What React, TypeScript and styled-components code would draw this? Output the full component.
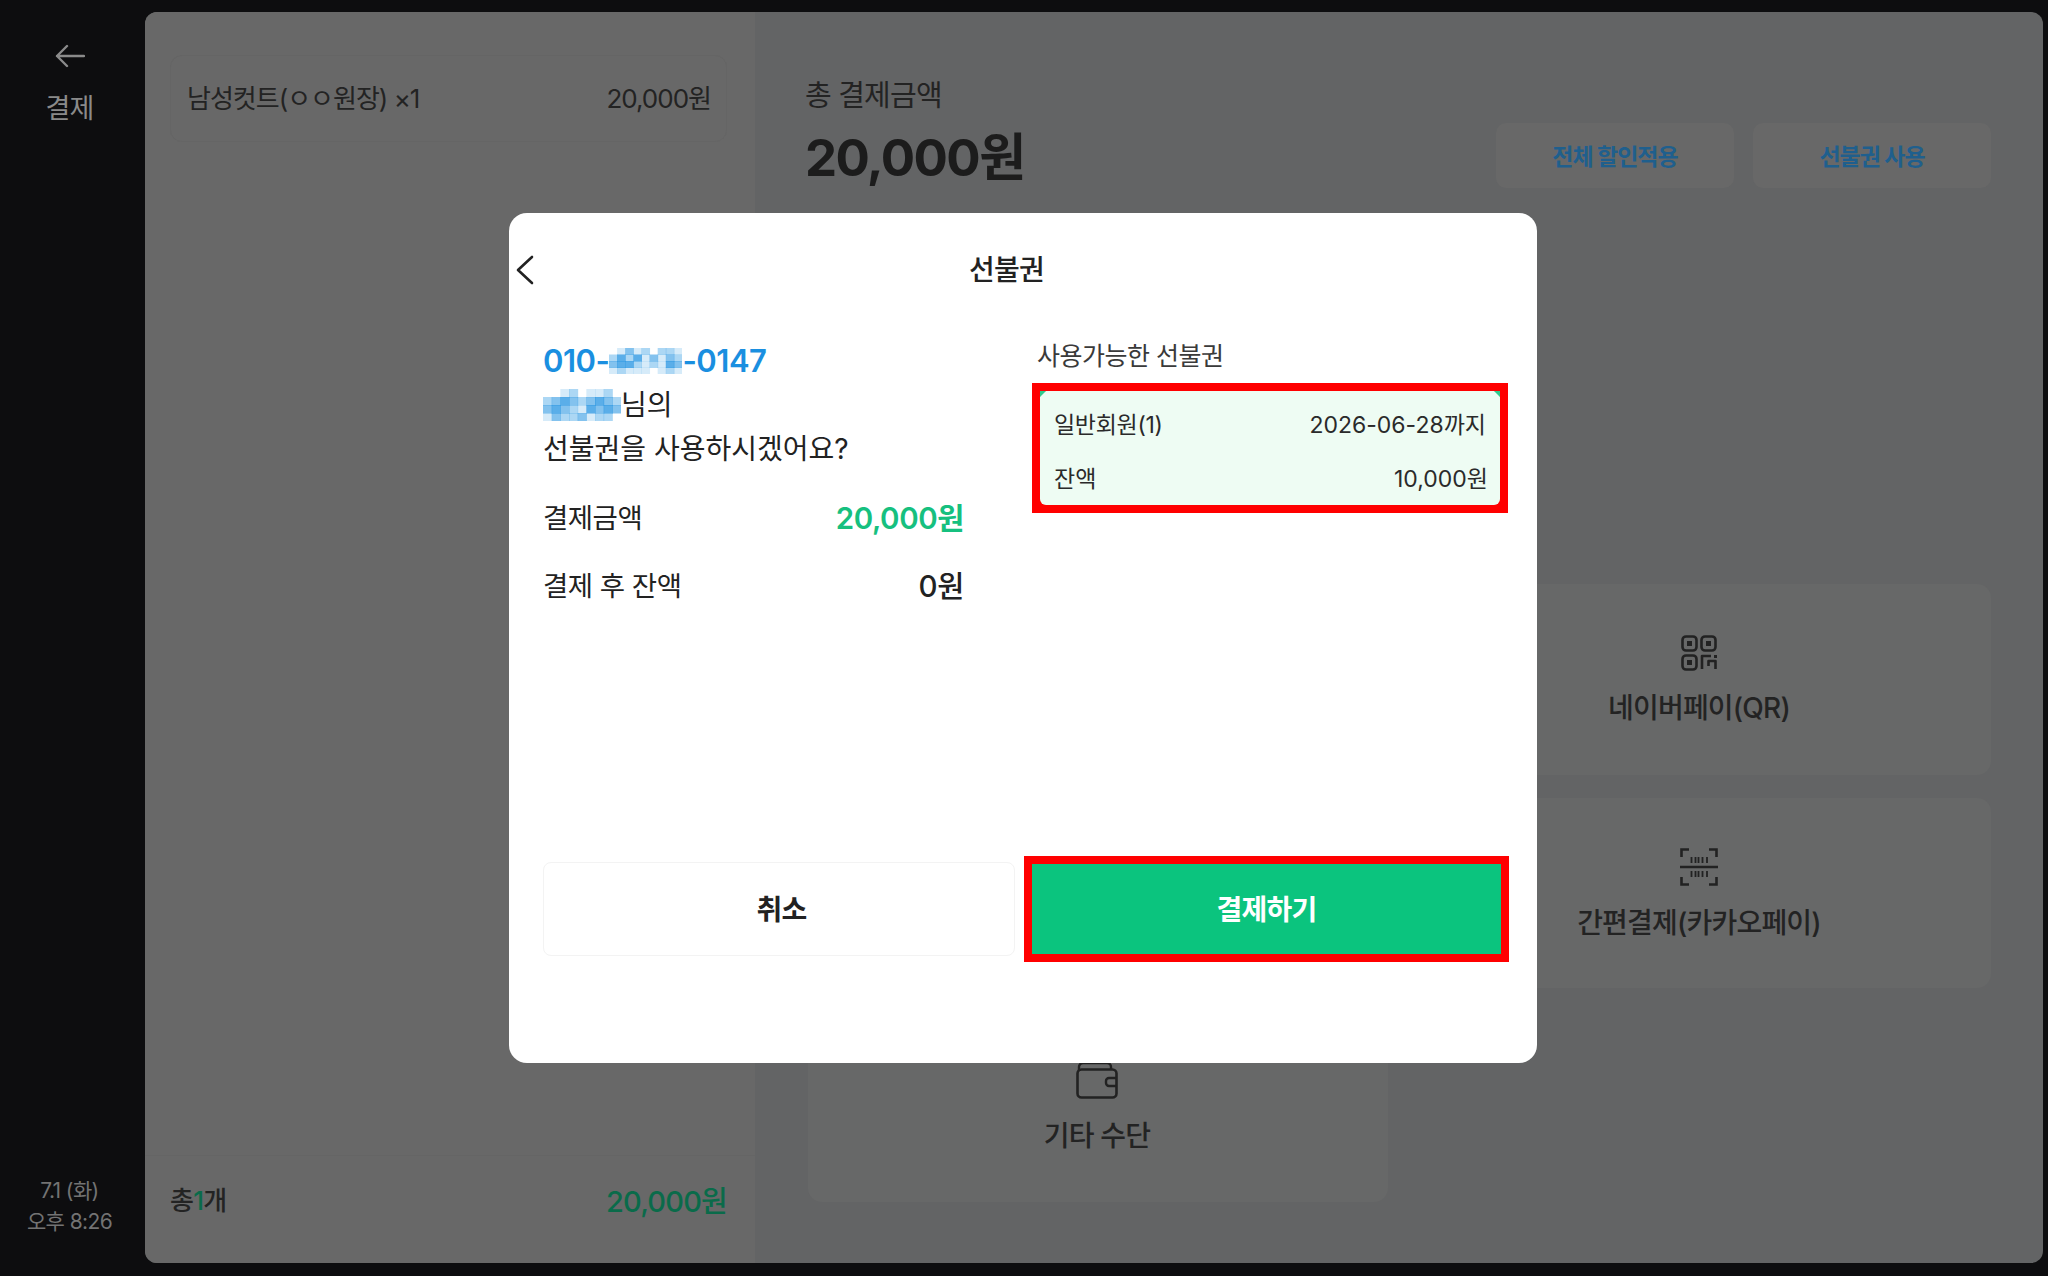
import React from 'react';
import styled, { createGlobalStyle } from 'styled-components';

const FONT_STACK = `Inter, 'Noto Sans CJK KR', 'Noto Sans', sans-serif`;

const GlobalStyle = createGlobalStyle`
  html, body {
    margin: 0;
    padding: 0;
    background: #0d0d0f;
    font-family: ${FONT_STACK};
  }
  * {
    box-sizing: border-box;
  }
`;

const StyledPage = styled.div`
  display: flex;
  width: 2048px;
  height: 1276px;
  overflow: hidden;
  padding: 12px 5px 13px 0;
  background: #0d0d0f;
`;

const StyledSidebar = styled.aside`
  width: 145px;
  flex: none;
  display: flex;
  flex-direction: column;
  align-items: center;
  justify-content: space-between;
  padding: 32px 6px 26px 0;
`;

const StyledSideTop = styled.div`
  display: flex;
  flex-direction: column;
  align-items: center;
  gap: 25px;
`;

const StyledSideTitle = styled.span`
  font-size: 27px;
  line-height: 32px;
  letter-spacing: -0.8px;
  color: #8a8a8a;
`;

const StyledClock = styled.div`
  font-size: 21px;
  line-height: 31px;
  letter-spacing: -0.6px;
  text-align: center;
  color: #737373;
`;

const StyledPanel = styled.main`
  flex: 1;
  display: flex;
  border-radius: 12px;
  overflow: hidden;
  background: #636465;
`;

const StyledCartColumn = styled.section`
  width: 610px;
  flex: none;
  display: flex;
  flex-direction: column;
  background: #686868;
`;

const StyledCartList = styled.div`
  flex: 1;
  padding: 43px 28px 0 25px;
`;

const StyledCartItem = styled.div`
  height: 87px;
  display: flex;
  align-items: center;
  justify-content: space-between;
  padding: 0 15px 4px 16px;
  border: 1px solid #656565;
  border-radius: 12px;
  background: #686868;
  font-size: 26px;
  letter-spacing: -1px;
  color: #232323;
`;

const StyledCartFooter = styled.div`
  height: 108px;
  display: flex;
  align-items: center;
  justify-content: space-between;
  padding: 0 28px 22px 25px;
  border-top: 1px solid #656565;
  font-size: 26px;
  font-weight: 500;
  letter-spacing: -0.8px;
  color: #232323;
`;

const StyledCount = styled.span`
  color: #0a6b4a;
`;

const StyledCartTotal = styled.span`
  font-size: 29px;
  font-weight: 500;
  letter-spacing: -0.8px;
  color: #0a6b4a;
`;

const StyledPayColumn = styled.section`
  flex: 1;
  padding: 0 52px 0 50px;
`;

const StyledPayHeader = styled.header`
  height: 572px;
  display: flex;
  justify-content: space-between;
  align-items: flex-start;
`;

const StyledTotalLabel = styled.div`
  margin-top: 65px;
  font-size: 29px;
  line-height: 38px;
  letter-spacing: -0.8px;
  color: #232323;
`;

const StyledTotalAmount = styled.div`
  margin-top: 13px;
  font-size: 51px;
  line-height: 60px;
  font-weight: 700;
  letter-spacing: -1.6px;
  color: #1c1c1c;
`;

const StyledHeaderActions = styled.div`
  display: flex;
  gap: 19px;
  margin-top: 111px;
`;

const StyledActionButton = styled.button`
  width: 238px;
  height: 65px;
  padding: 0 0 2px;
  border: none;
  border-radius: 10px;
  background: #686868;
  font-family: inherit;
  font-size: 23px;
  font-weight: 700;
  letter-spacing: -1px;
  color: #1f5f8d;
`;

const StyledPayGrid = styled.div`
  display: grid;
  grid-template-columns: 580px 582px;
  grid-auto-rows: 190.5px;
  column-gap: 21px;
  row-gap: 23px;
  margin-left: 3px;
`;

const StyledPayCard = styled.div`
  display: flex;
  flex-direction: column;
  align-items: center;
  justify-content: center;
  gap: 18px;
  padding: 4px 2px 0 0;
  border-radius: 14px;
  background: #676868;
  font-size: 28px;
  line-height: 38px;
  font-weight: 500;
  letter-spacing: -0.8px;
  color: #232323;
`;

const StyledBackdrop = styled.div`
  position: fixed;
  inset: 0;
  display: flex;
  align-items: center;
  justify-content: center;
  padding-right: 2px;
`;

const StyledModal = styled.div`
  width: 1028px;
  height: 850px;
  display: flex;
  flex-direction: column;
  padding: 40px 28px 101px 34px;
  border-radius: 18px;
  background: #ffffff;
  color: #222222;
`;

const StyledModalHeader = styled.div`
  height: 34px;
  display: flex;
  align-items: center;
  margin-left: -28px;
`;

const StyledModalTitle = styled.h2`
  flex: 1;
  margin: 0;
  padding-right: 30px;
  text-align: center;
  font-size: 28px;
  line-height: 36px;
  font-weight: 500;
  letter-spacing: -0.8px;
  color: #222222;
`;

const StyledModalBody = styled.div`
  display: grid;
  grid-template-columns: 421px 476px;
  column-gap: 68px;
  margin-top: 52px;
`;

const StyledGreeting = styled.div`
  font-size: 28px;
  line-height: 44px;
  letter-spacing: 0;
`;

const StyledPhone = styled.div`
  display: flex;
  align-items: center;
  font-size: 31px;
  font-weight: 600;
  letter-spacing: -0.5px;
  color: #1a8fe0;
`;

const StyledNameRow = styled.div`
  display: flex;
  align-items: center;
`;

const StyledMosaic = styled.svg`
  display: block;
  flex: none;
  filter: blur(0.7px);
`;

const StyledSummary = styled.div`
  display: grid;
  gap: 24px;
  margin-top: 23px;
`;

const StyledSummaryRow = styled.div`
  height: 44px;
  display: flex;
  align-items: center;
  justify-content: space-between;
  font-size: 27.5px;
  letter-spacing: -0.5px;
`;

const StyledSummaryValue = styled.span<{ $green?: boolean }>`
  font-size: 29.5px;
  font-weight: ${({ $green }) => ($green ? 600 : 500)};
  letter-spacing: -0.4px;
  color: ${({ $green }) => ($green ? '#16c07f' : '#222222')};
`;

const StyledSectionLabel = styled.div`
  padding-top: 1px;
  padding-left: 5px;
  font-size: 25px;
  line-height: 32px;
  letter-spacing: -0.5px;
  color: #3a3a3a;
`;

const StyledHighlight = styled.div`
  border: 8px solid #ff0000;
  background: #ff0000;
`;

const StyledVoucher = styled.div`
  position: relative;
  height: 114px;
  display: grid;
  align-content: space-between;
  padding: 17px 12px 9px 14px;
  border-radius: 6px;
  background: #eefcf3;

  &::before,
  &::after {
    content: '';
    position: absolute;
    top: 0;
    width: 6px;
    height: 6px;
    background: #31c98c;
  }

  &::before {
    left: 0;
    clip-path: polygon(0 0, 100% 0, 0 100%);
  }

  &::after {
    right: 0;
    clip-path: polygon(0 0, 100% 0, 100% 100%);
  }
`;

const StyledVoucherRow = styled.div`
  display: flex;
  justify-content: space-between;
  font-size: 23px;
  line-height: 34px;
  letter-spacing: 0;
  color: #2a2a2a;
`;

const StyledVoucherDate = styled.span`
  margin-right: 2px;
`;

const StyledVoucherName = styled.span`
  letter-spacing: -0.3px;
`;

const StyledVoucherList = styled.div`
  margin-top: 11px;
`;

const StyledModalFooter = styled.div`
  display: grid;
  grid-template-columns: 472px 485px;
  column-gap: 9px;
  align-items: center;
  margin-top: auto;
`;

const StyledCancelButton = styled.button`
  height: 94px;
  padding: 0 0 2px 5px;
  border: 1px solid #f3f3f3;
  border-radius: 8px;
  background: #ffffff;
  font-family: inherit;
  font-size: 28px;
  font-weight: 600;
  letter-spacing: -0.8px;
  color: #222222;
`;

const StyledPayButton = styled.button`
  width: 100%;
  height: 90px;
  display: block;
  padding: 0 0 3px;
  border: none;
  background: #0bc47e;
  font-family: inherit;
  font-size: 28px;
  font-weight: 600;
  letter-spacing: -0.8px;
  color: #ffffff;
`;

// 개인정보 가림 처리된 모자이크 (셀 값은 투명도 단계)
const PHONE_CELLS = [
  '013120221',
  '242413132',
  '344212143',
  '121110121',
];

const NAME_CELLS = [
  '001201120',
  '234323432',
  '343214343',
  '132231220',
];

const Mosaic = ({
  cells,
  width,
  height,
}: {
  cells: string[];
  width: number;
  height: number;
}) => {
  const cellWidth = width / cells[0].length;
  const cellHeight = height / cells.length;
  return (
    <StyledMosaic width={width} height={height}>
      {cells.map((row, y) =>
        row.split('').map((value, x) => (
          <rect
            key={`${x}-${y}`}
            x={x * cellWidth}
            y={y * cellHeight}
            width={cellWidth + 0.5}
            height={cellHeight + 0.5}
            fill="#1a8fe0"
            opacity={Number(value) * 0.18}
          />
        )),
      )}
    </StyledMosaic>
  );
};

const BackArrowIcon = () => (
  <svg width="30" height="24" viewBox="0 0 30 24" fill="none">
    <path
      d="M29 12H2M12 2 2 12l10 10"
      stroke="#8a8a8a"
      strokeWidth="2.4"
      strokeLinecap="round"
      strokeLinejoin="round"
    />
  </svg>
);

const ChevronIcon = () => (
  <svg width="19" height="30" viewBox="0 0 19 30" fill="none">
    <path
      d="M17 2 3 15l14 13"
      stroke="#222222"
      strokeWidth="2.6"
      strokeLinecap="round"
      strokeLinejoin="round"
    />
  </svg>
);

const QrIcon = () => (
  <svg width="36" height="36" viewBox="0 0 36 36" fill="none">
    <g stroke="#222222" strokeWidth="2.6">
      <rect x="1.5" y="1.5" width="14" height="14" rx="3.5" />
      <rect x="20.5" y="1.5" width="14" height="14" rx="3.5" />
      <rect x="1.5" y="20.5" width="14" height="14" rx="3.5" />
      <path d="M21 34V21h9M34.5 34v-8h-7v5" strokeLinejoin="round" />
    </g>
    <g fill="#222222">
      <rect x="6" y="6" width="5" height="5" />
      <rect x="25" y="6" width="5" height="5" />
      <rect x="6" y="25" width="5" height="5" />
      <rect x="33" y="20" width="3" height="3" />
    </g>
  </svg>
);

const BarcodeIcon = () => (
  <svg width="38" height="38" viewBox="0 0 38 38" fill="none">
    <path
      d="M1.5 9V1.5H9M29 1.5h7.5V9M1.5 29v7.5H9M29 36.5h7.5V29"
      stroke="#222222"
      strokeWidth="2.6"
    />
    <path d="M0 19h38" stroke="#222222" strokeWidth="2.4" />
    <path
      d="M11.5 9v6M15.5 9v6M18.5 9v6M22.5 9v6M27 9v6M11.5 23v6M15.5 23v6M18.5 23v6M22.5 23v6M27 23v6"
      stroke="#222222"
      strokeWidth="1.8"
    />
  </svg>
);

const WalletIcon = () => (
  <svg width="42" height="38" viewBox="0 0 42 38" fill="none">
    <path
      d="M3 10V6a4 4 0 0 1 4-4h24a4 4 0 0 1 4 4v3"
      stroke="#222222"
      strokeWidth="2.4"
    />
    <rect
      x="1.5"
      y="8.5"
      width="39"
      height="28"
      rx="4"
      stroke="#222222"
      strokeWidth="2.6"
    />
    <path
      d="M40 17H33a3 3 0 0 0-3 3v2a3 3 0 0 0 3 3h7"
      stroke="#222222"
      strokeWidth="2.4"
    />
  </svg>
);

const App = () => {
  return (
    <>
      <GlobalStyle />
      <StyledPage>
        <StyledSidebar>
          <StyledSideTop>
            <BackArrowIcon />
            <StyledSideTitle>결제</StyledSideTitle>
          </StyledSideTop>
          <StyledClock>
            7.1 (화)
            <br />
            오후 8:26
          </StyledClock>
        </StyledSidebar>
        <StyledPanel>
          <StyledCartColumn>
            <StyledCartList>
              <StyledCartItem>
                <span>남성컷트(ㅇㅇ원장) ×1</span>
                <span>20,000원</span>
              </StyledCartItem>
            </StyledCartList>
            <StyledCartFooter>
              <span>
                총<StyledCount>1</StyledCount>개
              </span>
              <StyledCartTotal>20,000원</StyledCartTotal>
            </StyledCartFooter>
          </StyledCartColumn>
          <StyledPayColumn>
            <StyledPayHeader>
              <div>
                <StyledTotalLabel>총 결제금액</StyledTotalLabel>
                <StyledTotalAmount>20,000원</StyledTotalAmount>
              </div>
              <StyledHeaderActions>
                <StyledActionButton>전체 할인적용</StyledActionButton>
                <StyledActionButton>선불권 사용</StyledActionButton>
              </StyledHeaderActions>
            </StyledPayHeader>
            <StyledPayGrid>
              <StyledPayCard />
              <StyledPayCard>
                <QrIcon />
                <span>네이버페이(QR)</span>
              </StyledPayCard>
              <StyledPayCard />
              <StyledPayCard>
                <BarcodeIcon />
                <span>간편결제(카카오페이)</span>
              </StyledPayCard>
              <StyledPayCard>
                <WalletIcon />
                <span>기타 수단</span>
              </StyledPayCard>
            </StyledPayGrid>
          </StyledPayColumn>
        </StyledPanel>
      </StyledPage>
      <StyledBackdrop>
        <StyledModal>
          <StyledModalHeader>
            <ChevronIcon />
            <StyledModalTitle>선불권</StyledModalTitle>
          </StyledModalHeader>
          <StyledModalBody>
            <div>
              <StyledGreeting>
                <StyledPhone>
                  010-
                  <Mosaic cells={PHONE_CELLS} width={73} height={26} />
                  -0147
                </StyledPhone>
                <StyledNameRow>
                  <Mosaic cells={NAME_CELLS} width={78} height={32} />
                  님의
                </StyledNameRow>
                <div>선불권을 사용하시겠어요?</div>
              </StyledGreeting>
              <StyledSummary>
                <StyledSummaryRow>
                  <span>결제금액</span>
                  <StyledSummaryValue $green>20,000원</StyledSummaryValue>
                </StyledSummaryRow>
                <StyledSummaryRow>
                  <span>결제 후 잔액</span>
                  <StyledSummaryValue>0원</StyledSummaryValue>
                </StyledSummaryRow>
              </StyledSummary>
            </div>
            <div>
              <StyledSectionLabel>사용가능한 선불권</StyledSectionLabel>
              <StyledVoucherList>
                <StyledHighlight>
                  <StyledVoucher>
                    <StyledVoucherRow>
                      <StyledVoucherName>일반회원(1)</StyledVoucherName>
                      <StyledVoucherDate>2026-06-28까지</StyledVoucherDate>
                    </StyledVoucherRow>
                    <StyledVoucherRow>
                      <span>잔액</span>
                      <span>10,000원</span>
                    </StyledVoucherRow>
                  </StyledVoucher>
                </StyledHighlight>
              </StyledVoucherList>
            </div>
          </StyledModalBody>
          <StyledModalFooter>
            <StyledCancelButton>취소</StyledCancelButton>
            <StyledHighlight>
              <StyledPayButton>결제하기</StyledPayButton>
            </StyledHighlight>
          </StyledModalFooter>
        </StyledModal>
      </StyledBackdrop>
    </>
  );
};

export default App;
